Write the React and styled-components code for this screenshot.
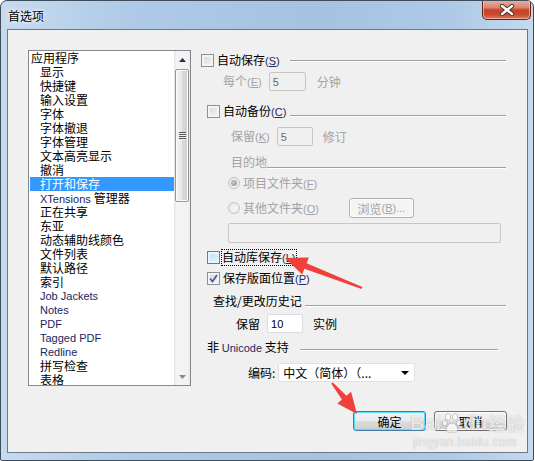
import React from 'react';
import styled, {createGlobalStyle, css} from 'styled-components';

const cjk = `"Noto Sans CJK SC", "Liberation Sans", sans-serif`;
const latin = `"Liberation Sans", "Noto Sans CJK SC", sans-serif`;

const GlobalStyle = createGlobalStyle`
    * { box-sizing: border-box; }
    html, body {
        margin: 0;
        padding: 0;
        background: #ffffff;
    }
    body {
        font-family: ${cjk};
        font-size: 12px;
        color: #000;
    }
`

const Window = styled.div`
    position: relative;
    width: 534px;
    height: 461px;
    border: 1px solid #3f4c5c;
    border-radius: 7px 7px 2px 2px;
    background: linear-gradient(90deg, #c6daef 0%, #aecae6 25%, #a5c2e0 60%, #aecae6 85%, #c4d9ee 100%);
    display: flex;
    flex-direction: column;
    padding: 0 5px 7px 6px;
    overflow: hidden;
`

const TitleBar = styled.div`
    height: 28px;
    display: flex;
    align-items: center;
    padding-left: 1px;
    font-family: ${cjk};
    font-size: 12px;
    color: #000;
    text-shadow: 0 0 6px #fff, 0 0 3px #fff;
`

const CloseButton = styled.div`
    position: absolute;
    top: -1px;
    right: 2px;
    width: 49px;
    height: 20px;
    border: 1px solid #5e2519;
    border-top: 0;
    border-radius: 0 0 5px 5px;
    background: linear-gradient(180deg, #e9b3a3 0%, #d98470 40%, #c6442a 52%, #c9472d 75%, #dd7b5e 100%);
    box-shadow: inset 0 0 0 1px rgba(255, 220, 210, 0.55);
    display: flex;
    align-items: center;
    justify-content: center;
`

const Panel = styled.div`
    flex: 1;
    background: #f0f0f0;
    border: 1px solid #6c7888;
    display: flex;
    align-items: flex-start;
    padding: 20px 0 0 20px;
    gap: 10px;
`

const ListBox = styled.div`
    width: 163px;
    height: 336px;
    border: 1px solid #828790;
    background: #fff;
    display: flex;
`

const ListItems = styled.div`
    flex: 1;
    overflow: hidden;
    padding-left: 1px;
`

const ListItem = styled.div`
    height: 14px;
    line-height: 14px;
    white-space: nowrap;
    padding-left: ${p => p.$top ? 1 : 10}px;
    font-family: ${p => p.$latin ? latin : cjk};
    font-size: ${p => p.$latin ? 11 : 12}px;
    color: ${p => p.$latin ? '#1b2560' : '#000'};
    ${p => p.$selected && css`
        background: #3399ff;
        color: #fff;
    `}
`

const Latin = styled.span`
    font-family: ${latin};
    font-size: 11px;
    color: #1b2560;
`

const ScrollBar = styled.div`
    width: 16px;
    display: flex;
    flex-direction: column;
    background: linear-gradient(90deg, #e3e3e3 0%, #f3f3f3 15%, #f3f3f3 85%, #e8e8e8 100%);
`

const ScrollArrow = styled.div`
    height: 17px;
    display: flex;
    align-items: center;
    justify-content: center;
    margin-top: ${p => p.$bottom ? 'auto' : 0};
`

const Thumb = styled.div`
    margin: 1px 1px 0 1px;
    height: 133px;
    border: 1px solid #979797;
    border-radius: 2px;
    background: linear-gradient(90deg, #f3f3f3 0%, #e9e9e9 45%, #d9d9d9 55%, #cfcfcf 100%);
    box-shadow: inset 0 0 0 1px #fbfbfb;
    display: flex;
    flex-direction: column;
    align-items: center;
    justify-content: center;
    gap: 1px;
`

const Grip = styled.div`
    width: 7px;
    height: 1px;
    background: #555;
    box-shadow: 0 1px 0 #f0f0f0;
`

const Options = styled.div`
    width: 306px;
    display: flex;
    flex-direction: column;
`

const Row = styled.div`
    display: flex;
    align-items: center;
    height: ${p => p.$h || 20}px;
    margin-top: ${p => p.$mt || 0}px;
    padding-left: ${p => p.$indent || 0}px;
    color: ${p => p.$disabled ? '#a3a3a3' : '#000'};
    white-space: nowrap;
`

const Text = styled.span`
    font-family: ${cjk};
    font-size: 12px;
    line-height: 14px;
    margin-left: ${p => p.$ml || 0}px;
    ${p => p.$focus && css`
        outline: 1px dotted #000;
        outline-offset: 0;
        padding-right: 1px;
    `}
`

const Key = styled.span`
    font-family: ${latin};
    font-size: 11px;
    color: ${p => p.$disabled ? '#a3a3a3' : '#1d2a66'};
    u { text-decoration: underline; }
`

const Check = styled.div`
    width: 13px;
    height: 13px;
    flex: none;
    border: 1px solid ${p => p.$hover ? '#4a86b2' : '#8e8f8f'};
    background: ${p => p.$hover
        ? 'linear-gradient(135deg, #b9e0f7 0%, #e8f6fd 100%)'
        : 'linear-gradient(135deg, #d6d6d6 0%, #f6f6f6 100%)'};
    box-shadow: inset 0 0 0 2px ${p => p.$hover ? '#e9f5fd' : '#f4f4f4'};
    display: flex;
    align-items: center;
    justify-content: center;
`

const Radio = styled.div`
    width: 12px;
    height: 12px;
    flex: none;
    border-radius: 50%;
    border: 1px solid #c3c3c3;
    background: radial-gradient(circle at 60% 60%, #f6f6f6 0%, #e4e4e4 100%);
    display: flex;
    align-items: center;
    justify-content: center;

    &::after {
        content: '';
        width: 6px;
        height: 6px;
        border-radius: 50%;
        background: ${p => p.$checked ? 'radial-gradient(circle at 40% 40%, #c8c8c8, #8c8c8c)' : 'transparent'};
    }
`

const GroupLine = styled.div`
    width: ${p => p.$w}px;
    height: 2px;
    margin-left: auto;
    margin-right: ${p => p.$mr || 1}px;
    margin-top: ${p => (p.$dy || 0) * 2}px;
    border-top: 1px solid #a0a0a0;
    border-bottom: 1px solid #ffffff;
`

const Field = styled.div`
    width: ${p => p.$w}px;
    height: ${p => p.$h || 19}px;
    margin-left: ${p => p.$ml || 0}px;
    flex: none;
    border: 1px solid ${p => p.$disabled ? '#c6c6c6' : '#d9dce2'};
    border-radius: 2px;
    background: ${p => p.$disabled ? '#f0f0f0' : '#ffffff'};
    display: flex;
    align-items: center;
    padding-left: 3px;
    font-family: ${latin};
    font-size: 11px;
    color: ${p => p.$disabled ? '#6a6a6a' : '#000'};
`

const Select = styled.div`
    width: 137px;
    height: 19px;
    margin-left: 3px;
    border: 1px solid #dfe1e5;
    border-radius: 2px;
    background: #fff;
    display: flex;
    align-items: center;
    padding: 0 5px 0 4px;
    font-family: ${cjk};
    font-size: 12px;
    color: #000;
`

const SelectArrow = styled.div`
    margin-left: auto;
    width: 0;
    height: 0;
    border-left: 4px solid transparent;
    border-right: 4px solid transparent;
    border-top: 4px solid #000;
`

const Button = styled.div`
    width: ${p => p.$w || 73}px;
    height: 20px;
    flex: none;
    border: 1px solid ${p => p.$default ? '#3c7fb1' : p.$disabled ? '#adb2b5' : '#707070'};
    border-radius: 3px;
    background: ${p => p.$disabled
        ? '#f4f4f4'
        : 'linear-gradient(180deg, #f2f2f2 0%, #ebebeb 50%, #dddddd 51%, #cfcfcf 100%)'};
    box-shadow: inset 0 0 0 1px ${p => p.$default ? '#5fdcfb' : '#fcfcfc'};
    display: flex;
    align-items: center;
    justify-content: center;
    font-family: ${cjk};
    font-size: 12px;
    color: ${p => p.$disabled ? '#a3a3a3' : '#000'};
    margin-left: ${p => p.$auto ? 'auto' : '0'};
    margin-right: ${p => p.$mr || 0}px;
`

const ButtonRow = styled.div`
    display: flex;
    justify-content: flex-end;
    gap: 8px;
    margin-top: 29px;
`

const Overlay = styled.svg`
    position: absolute;
    left: -1px;
    top: -1px;
    pointer-events: none;
`

const Watermark = styled.div`
    position: absolute;
    left: 409px;
    top: 410px;
    width: max-content;
    white-space: nowrap;
    display: flex;
    flex-direction: column;
    align-items: flex-start;
    pointer-events: none;
    color: rgba(255, 255, 255, 0.75);
    text-shadow: 0 0 1px rgba(90, 90, 90, 0.5);
`

const MarkTop = styled.div`
    display: flex;
    align-items: center;
    font-family: ${latin};
    font-weight: bold;
    font-size: 20px;
    line-height: 24px;
`

const MarkCjk = styled.span`
    font-family: ${cjk};
    font-size: 18px;
    font-weight: bold;
    margin-left: 1px;
`

const MarkUrl = styled.div`
    font-family: ${latin};
    font-size: 12px;
    letter-spacing: 0.4px;
    margin-left: 3px;
`

const CheckMark = () => (
    <svg width="9" height="9" viewBox="0 0 9 9">
        <path d="M1 4.5 L3.5 7.5 L8 1" fill="none" stroke="#4b5fa0" strokeWidth="1.8"/>
    </svg>
)

const CloseGlyph = () => (
    <svg width="16" height="12" viewBox="0 0 16 12">
        <path d="M3 2 L13 10 M13 2 L3 10" stroke="#4a2a22" strokeWidth="4.2" strokeLinecap="round"/>
        <path d="M3 2 L13 10 M13 2 L3 10" stroke="#ffffff" strokeWidth="2.4" strokeLinecap="round"/>
    </svg>
)

const Triangle = ({up, color}) => (
    <svg width="7" height="4" viewBox="0 0 7 4">
        <path d={up ? 'M0 4 L3.5 0 L7 4 Z' : 'M0 0 L3.5 4 L7 0 Z'} fill={color}/>
    </svg>
)

const Paw = () => (
    <svg width="20" height="22" viewBox="0 0 20 22" style={{margin: '0 1px'}}>
        <g fill="rgba(255,255,255,0.75)" stroke="rgba(110,110,110,0.45)" strokeWidth="0.8">
            <ellipse cx="6" cy="5" rx="2.6" ry="3.4"/>
            <ellipse cx="13" cy="5" rx="2.6" ry="3.4"/>
            <ellipse cx="2.8" cy="11" rx="2.3" ry="2.9"/>
            <ellipse cx="16.8" cy="11" rx="2.3" ry="2.9"/>
            <path d="M10 11 C6 11 3.5 16 4.5 18.5 C5.5 21 8 20 10 20 C12 20 14.5 21 15.5 18.5 C16.5 16 14 11 10 11 Z"/>
        </g>
    </svg>
)

const items = [
    {t: '应用程序', top: true},
    {t: '显示'},
    {t: '快捷键'},
    {t: '输入设置'},
    {t: '字体'},
    {t: '字体撤退'},
    {t: '字体管理'},
    {t: '文本高亮显示'},
    {t: '撤消'},
    {t: '打开和保存', sel: true},
    {t: '管理器', pre: 'XTensions '},
    {t: '正在共享'},
    {t: '东亚'},
    {t: '动态辅助线颜色'},
    {t: '文件列表'},
    {t: '默认路径'},
    {t: '索引'},
    {t: 'Job Jackets', latin: true},
    {t: 'Notes', latin: true},
    {t: 'PDF', latin: true},
    {t: 'Tagged PDF', latin: true},
    {t: 'Redline', latin: true},
    {t: '拼写检查'},
    {t: '表格'},
]

const App = () => {
    return (
        <>
            <GlobalStyle/>
            <Window>
                <TitleBar>首选项</TitleBar>
                <CloseButton><CloseGlyph/></CloseButton>
                <Panel>
                    <ListBox>
                        <ListItems>
                            {items.map((it, i) => (
                                <ListItem key={i} $top={it.top} $latin={it.latin} $selected={it.sel}>
                                    {it.pre && <Latin>{it.pre}</Latin>}{it.t}
                                </ListItem>
                            ))}
                        </ListItems>
                        <ScrollBar>
                            <ScrollArrow><Triangle up color="#303030"/></ScrollArrow>
                            <Thumb><Grip/><Grip/><Grip/><Grip/></Thumb>
                            <ScrollArrow $bottom><Triangle color="#8a8a8a"/></ScrollArrow>
                        </ScrollBar>
                    </ListBox>

                    <Options>
                        <Row $h={20}>
                            <Check/>
                            <Text $ml={3}>自动保存<Key>(<u>S</u>)</Key></Text>
                            <GroupLine $w={216} $dy={1}/>
                        </Row>
                        <Row $h={19} $mt={2} $indent={22} $disabled>
                            <Text>每个<Key $disabled>(<u>E</u>)</Key></Text>
                            <Field $w={37} $ml={7} $disabled>5</Field>
                            <Text $ml={11}>分钟</Text>
                        </Row>
                        <Row $h={20} $mt={10} $indent={6}>
                            <Check/>
                            <Text $ml={3}>自动备份<Key>(<u>C</u>)</Key></Text>
                            <GroupLine $w={216} $dy={5}/>
                        </Row>
                        <Row $h={19} $mt={6} $indent={30} $disabled>
                            <Text>保留<Key $disabled>(<u>K</u>)</Key></Text>
                            <Field $w={36} $ml={7} $disabled>5</Field>
                            <Text $ml={10}>修订</Text>
                        </Row>
                        <Row $h={14} $mt={9} $indent={30} $disabled>
                            <Text>目的地</Text>
                            <GroupLine $w={239} $dy={6}/>
                        </Row>
                        <Row $h={16} $mt={6} $indent={27} $disabled>
                            <Radio $checked/>
                            <Text $ml={3}>项目文件夹<Key $disabled>(<u>F</u>)</Key></Text>
                        </Row>
                        <Row $h={20} $mt={7} $indent={27} $disabled>
                            <Radio/>
                            <Text $ml={3}>其他文件夹<Key $disabled>(<u>O</u>)</Key></Text>
                            <Button $w={65} $auto $mr={93} $disabled>
                                浏览<Key $disabled>(<u>B</u>)...</Key>
                            </Button>
                        </Row>
                        <Row $h={20} $mt={5} $indent={27}>
                            <Field $w={273} $h={20} $disabled/>
                        </Row>
                        <Row $h={14} $mt={7} $indent={6}>
                            <Check $hover/>
                            <Text $ml={2} $focus>自动库保存<Key>(<u>L</u>)</Key></Text>
                        </Row>
                        <Row $h={15} $mt={7} $indent={6}>
                            <Check><CheckMark/></Check>
                            <Text $ml={3}>保存版面位置<Key>(<u>P</u>)</Key></Text>
                        </Row>
                        <Row $h={14} $mt={8} $indent={12}>
                            <Text>查找/更改历史记</Text>
                            <GroupLine $w={201} $dy={5}/>
                        </Row>
                        <Row $h={19} $mt={6} $indent={35}>
                            <Text>保留</Text>
                            <Field $w={36} $ml={7}>10</Field>
                            <Text $ml={10}>实例</Text>
                        </Row>
                        <Row $h={14} $mt={7} $indent={6}>
                            <Text>非 <Key>Unicode</Key> 支持</Text>
                            <GroupLine $w={198} $mr={9} $dy={3}/>
                        </Row>
                        <Row $h={19} $mt={9} $indent={47}>
                            <Text>编码:</Text>
                            <Select>
                                中文（简体）（...
                                <SelectArrow/>
                            </Select>
                        </Row>
                        <ButtonRow>
                            <Button $default>确定</Button>
                            <Button>取消</Button>
                        </ButtonRow>
                    </Options>
                </Panel>

                <Watermark>
                    <MarkTop>Bai<Paw/>du<MarkCjk>经验</MarkCjk></MarkTop>
                    <MarkUrl>jingyan.baidu.com</MarkUrl>
                </Watermark>

                <Overlay width="535" height="461" viewBox="0 0 535 461">
                    <polygon
                        fill="#f0403c"
                        points="285,258 308.8,257.6 306.6,263.2 362.4,287.1 361.6,288.9 304.4,268.8 302.2,274.4"/>
                    <polygon
                        fill="#f0403c"
                        points="357,414 337.3,403.4 341.9,399.5 331.2,383.6 332.8,382.4 346.5,395.7 351.1,391.8"/>
                </Overlay>
            </Window>
        </>
    )
}

export default App;
